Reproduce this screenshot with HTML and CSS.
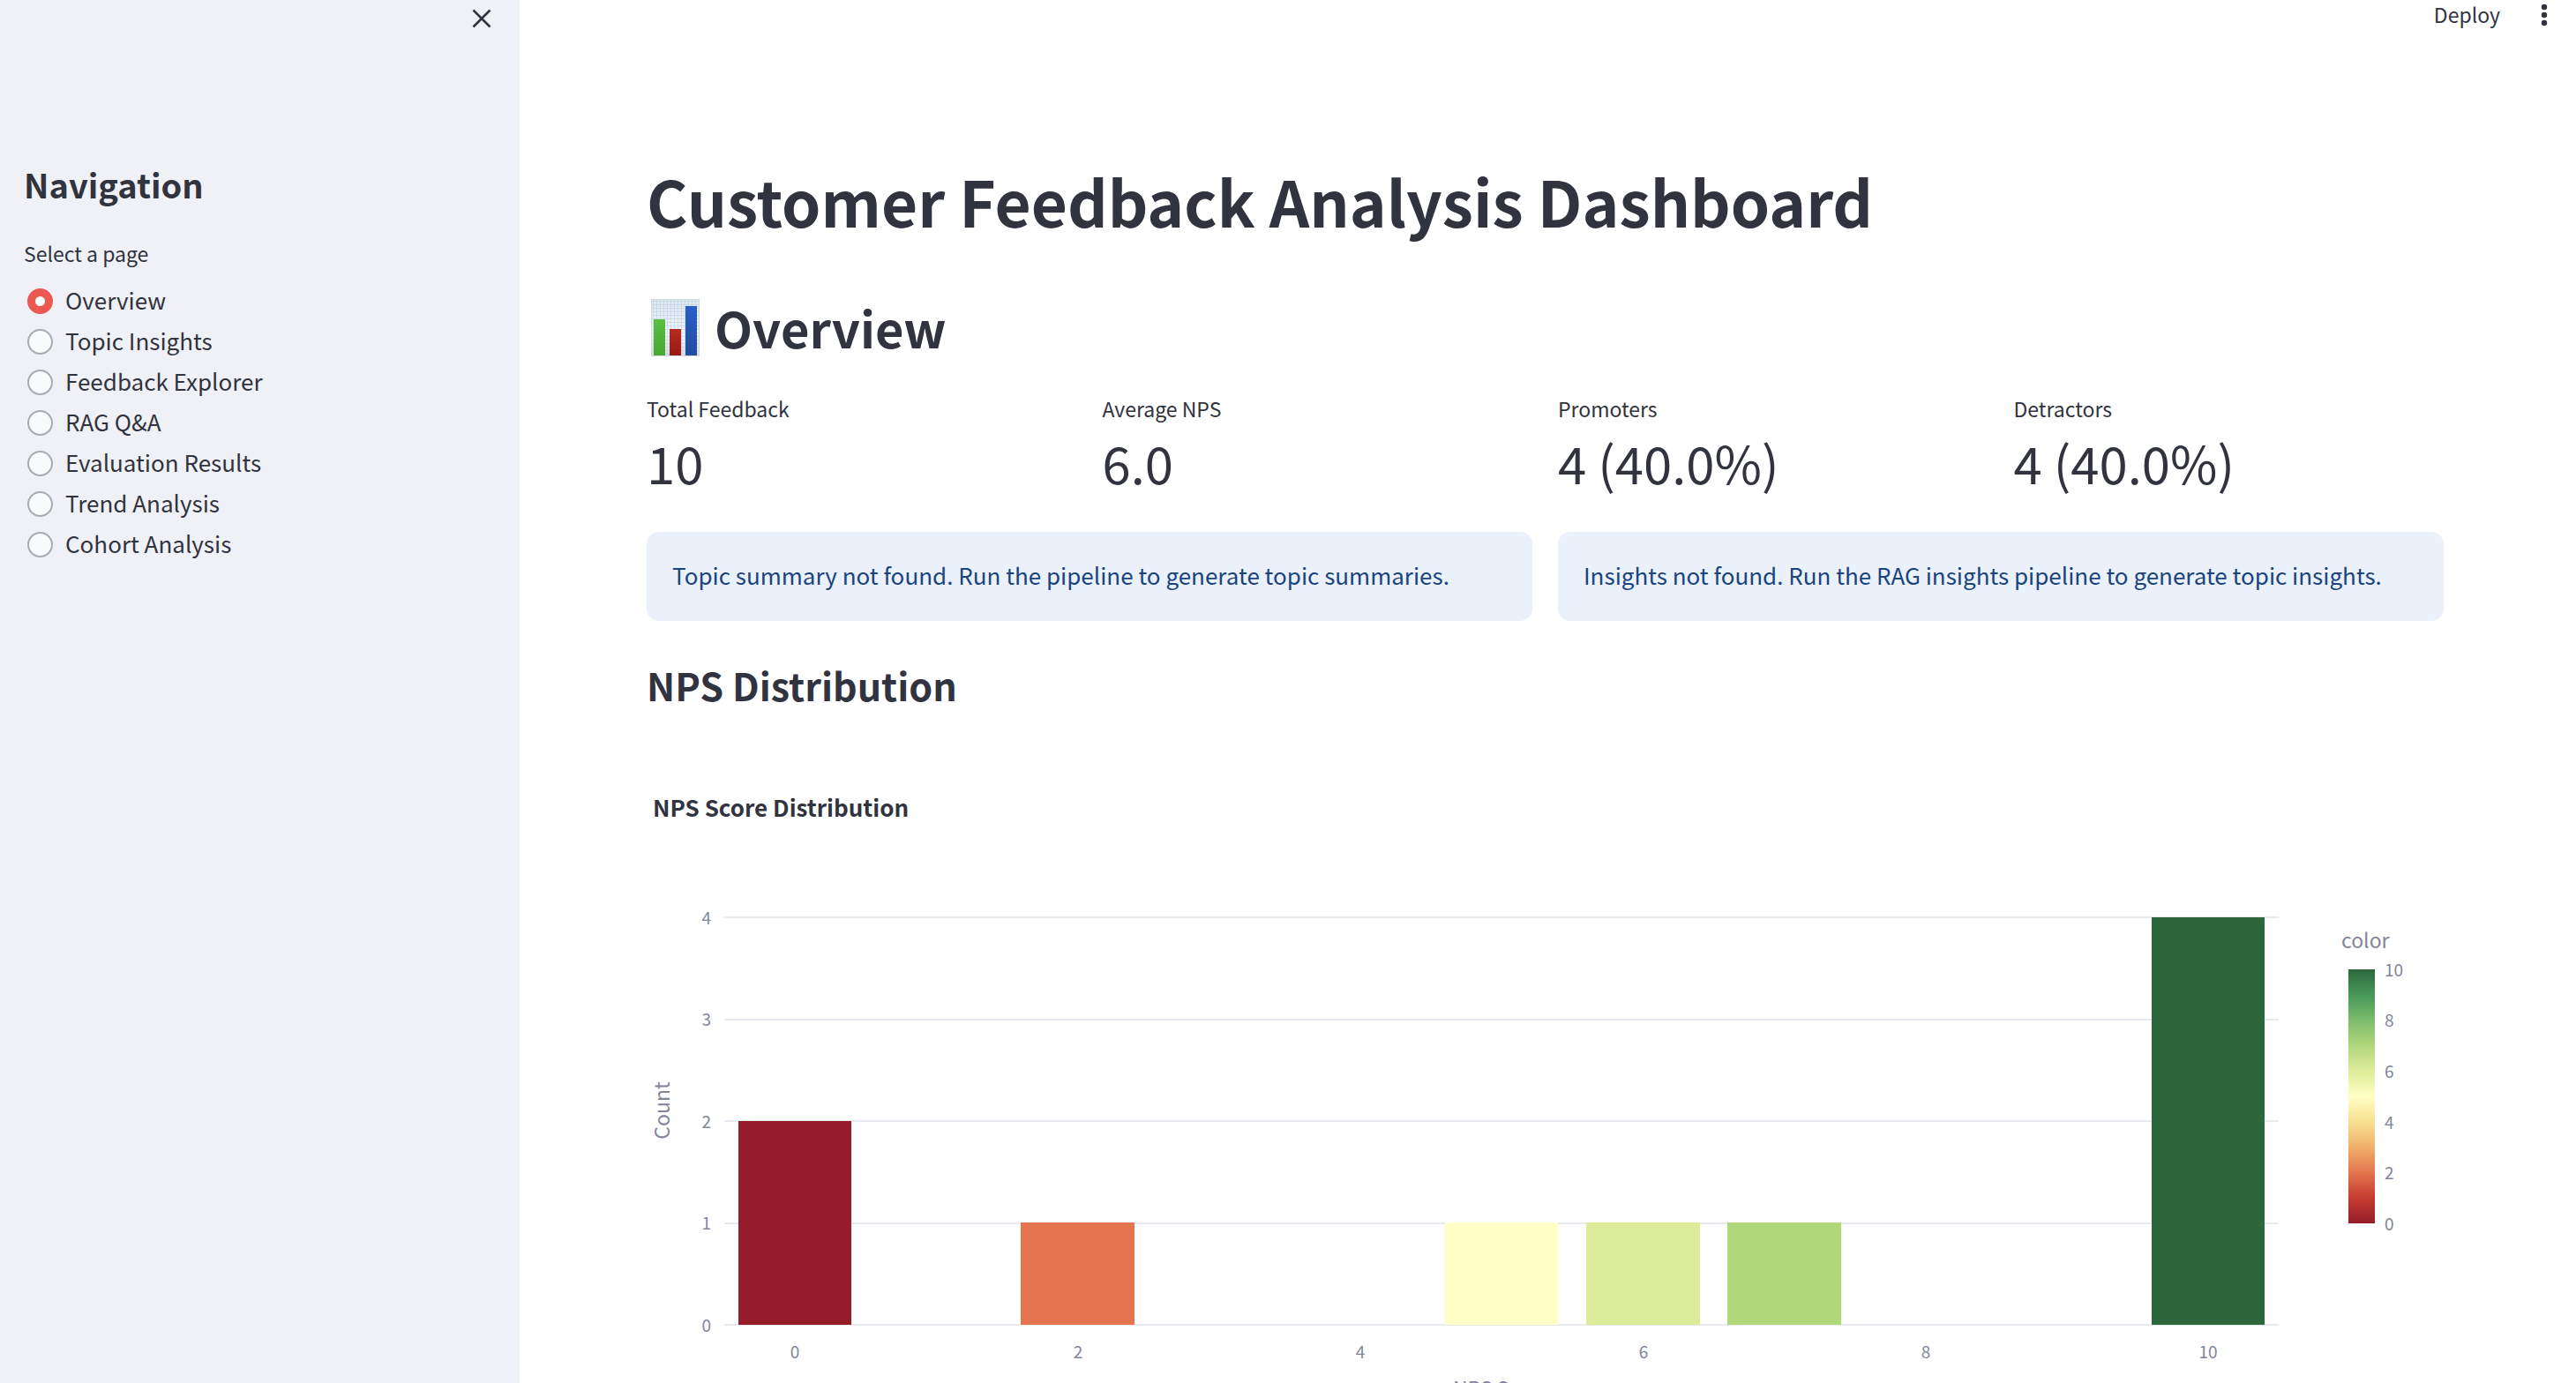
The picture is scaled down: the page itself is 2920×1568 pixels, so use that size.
FILE: index.html
```html
<!DOCTYPE html>
<html lang="en">
<head>
<meta charset="utf-8">
<title>Customer Feedback Analysis Dashboard</title>
<link rel="stylesheet" href="styles.css">
</head>
<body>
<div class="app">
  <aside class="sidebar">
    <div class="sidebar-top">
      <button class="icon-button" type="button" aria-label="Close sidebar">
        <svg width="22" height="22" viewBox="0 0 22 22"><path d="M1.5 1.5 20.500 20.500M20.500 1.500 1.500 20.500" fill="none" stroke="currentColor" stroke-width="2.600"/></svg>
      </button>
    </div>
    <h2 class="sidebar-title">Navigation</h2>
    <fieldset class="pages">
      <legend class="pages-label">Select a page</legend>
      <label class="page-option"><input class="radio" type="radio" name="page" checked><span>Overview</span></label>
      <label class="page-option"><input class="radio" type="radio" name="page"><span>Topic Insights</span></label>
      <label class="page-option"><input class="radio" type="radio" name="page"><span>Feedback Explorer</span></label>
      <label class="page-option"><input class="radio" type="radio" name="page"><span>RAG Q&amp;A</span></label>
      <label class="page-option"><input class="radio" type="radio" name="page"><span>Evaluation Results</span></label>
      <label class="page-option"><input class="radio" type="radio" name="page"><span>Trend Analysis</span></label>
      <label class="page-option"><input class="radio" type="radio" name="page"><span>Cohort Analysis</span></label>
    </fieldset>
  </aside>

  <div class="main">
    <header class="toolbar">
      <button class="deploy" type="button">Deploy</button>
      <button class="icon-button" type="button" aria-label="Menu">
        <svg width="8" height="26" viewBox="0 0 8 26" fill="currentColor"><circle cx="4" cy="4" r="3.200"/><circle cx="4" cy="13" r="3.200"/><circle cx="4" cy="22" r="3.200"/></svg>
      </button>
    </header>

    <main class="content">
      <h1 class="title">Customer Feedback Analysis Dashboard</h1>

      <h2 class="section-title">
        <svg class="emoji" width="55" height="65" viewBox="0 0 55 65" aria-hidden="true">
          <defs>
            <linearGradient id="paper" x1="0" y1="0" x2="0" y2="1"><stop offset="0" stop-color="#dfe6ec"/><stop offset="0.600" stop-color="#f1f5f9"/><stop offset="1" stop-color="#dcdfe2"/></linearGradient>
            <linearGradient id="green" x1="0" y1="0" x2="0" y2="1"><stop offset="0" stop-color="#58c040"/><stop offset="1" stop-color="#4aa634"/></linearGradient>
            <linearGradient id="red" x1="0" y1="0" x2="0" y2="1"><stop offset="0" stop-color="#b62a1e"/><stop offset="1" stop-color="#971a12"/></linearGradient>
            <linearGradient id="blue" x1="0" y1="0" x2="0" y2="1"><stop offset="0" stop-color="#2a60c8"/><stop offset="1" stop-color="#214b9e"/></linearGradient>
            <pattern id="grid" width="4" height="4" patternUnits="userSpaceOnUse"><path d="M0 2.500H4M2.500 0V4" stroke="#bcd6ea" stroke-width="1" opacity="0.700"/></pattern>
          </defs>
          <rect width="55" height="65" fill="url(#paper)"/>
          <rect width="55" height="65" fill="url(#grid)"/>
          <rect x="0.500" y="0.500" width="54" height="64" fill="none" stroke="#cfd5da" opacity="0.700"/>
          <rect x="3" y="23" width="13" height="41" fill="url(#green)"/>
          <rect x="21" y="34" width="13" height="30" fill="url(#red)"/>
          <rect x="39" y="8" width="13" height="56" fill="url(#blue)"/>
        </svg>
        <span>Overview</span>
      </h2>

      <dl class="metrics">
        <div class="metric"><dt>Total Feedback</dt><dd>10</dd></div>
        <div class="metric"><dt>Average NPS</dt><dd>6.0</dd></div>
        <div class="metric"><dt>Promoters</dt><dd>4 (40.0%)</dd></div>
        <div class="metric"><dt>Detractors</dt><dd>4 (40.0%)</dd></div>
      </dl>

      <div class="alerts">
        <p class="alert">Topic summary not found. Run the pipeline to generate topic summaries.</p>
        <p class="alert">Insights not found. Run the RAG insights pipeline to generate topic insights.</p>
      </div>

      <h3 class="chart-heading">NPS Distribution</h3>

      <svg class="chart" viewBox="0 0 2037 810" role="img" aria-label="NPS Score Distribution">
        <defs>
          <linearGradient id="scale" x1="0" y1="1" x2="0" y2="0">
            <stop offset="0" stop-color="#951d2a"/><stop offset="0.100" stop-color="#c53c31"/><stop offset="0.200" stop-color="#e4754e"/><stop offset="0.300" stop-color="#f0b06a"/><stop offset="0.400" stop-color="#f9e092"/><stop offset="0.500" stop-color="#ffffc6"/><stop offset="0.600" stop-color="#ddec98"/><stop offset="0.700" stop-color="#b1d77b"/><stop offset="0.800" stop-color="#7cbb6c"/><stop offset="0.900" stop-color="#479858"/><stop offset="1" stop-color="#2c673c"/>
          </linearGradient>
        </defs>
        <text class="chart-title" x="7" y="76">NPS Score Distribution</text>
        <path class="gridlines" d="M88 190H1850M88 306H1850M88 421H1850M88 537H1850M88 652H1850"/>
        <g>
          <rect x="104" y="421" width="128" height="231" fill="#951d2a"/>
          <rect x="424" y="536" width="129" height="116" fill="#e4754e"/>
          <rect x="905" y="536" width="128" height="116" fill="#ffffc6"/>
          <rect x="1065" y="536" width="129" height="116" fill="#ddec98"/>
          <rect x="1225" y="536" width="129" height="116" fill="#b1d77b"/>
          <rect x="1706" y="190" width="128" height="462" fill="#2c673c"/>
        </g>
        <g class="ticks" text-anchor="end">
          <text x="73" y="198">4</text><text x="73" y="313">3</text><text x="73" y="429">2</text><text x="73" y="544">1</text><text x="73" y="660">0</text>
        </g>
        <g class="ticks" text-anchor="middle">
          <text x="168" y="690">0</text><text x="489" y="690">2</text><text x="809" y="690">4</text><text x="1130" y="690">6</text><text x="1450" y="690">8</text><text x="1770" y="690">10</text>
        </g>
        <text class="axis-title" text-anchor="middle" x="969" y="733">NPS Score</text>
        <text class="axis-title" text-anchor="middle" transform="translate(26 409) rotate(-90)">Count</text>
        <text class="axis-title" x="1921" y="225">color</text>
        <rect x="1929" y="249" width="30" height="288" fill="url(#scale)"/>
        <g class="ticks">
          <text x="1970" y="257">10</text><text x="1970" y="314">8</text><text x="1970" y="372">6</text><text x="1970" y="430">4</text><text x="1970" y="487">2</text><text x="1970" y="545">0</text>
        </g>
      </svg>
    </main>
  </div>
</div>
</body>
</html>
```
FILE: styles.css
```css
* {
  box-sizing: border-box;
}

body {
  margin: 0;
  background: #fff;
  color: #31333f;
  font-family: "Noto Sans CJK SC", "Noto Sans", sans-serif;
  font-size: 26px;
  line-height: 42px;
}

h1, h2, h3, p, dl, dd {
  margin: 0;
}

button {
  padding: 0;
  border: 0;
  background: none;
  color: inherit;
  font: inherit;
}

.app {
  display: flex;
  height: 100vh;
  overflow: hidden;
}

.sidebar {
  flex: 0 0 589px;
  padding: 0 27px;
  background: #f0f1f6;
}

.sidebar-top {
  display: flex;
  justify-content: flex-end;
  height: 185px;
  padding: 10px 5px;
}

.icon-button {
  display: flex;
  align-self: flex-start;
}

.sidebar-title {
  font-size: 38px;
  line-height: 48px;
}

.pages {
  margin: 36px 0 0;
  padding: 0;
  border: 0;
}

.pages-label {
  margin-bottom: 13px;
  padding: 0;
  font-size: 23px;
  line-height: 36px;
}

.page-option {
  display: flex;
  align-items: center;
  gap: 14px;
  height: 46px;
  padding-left: 4px;
}

.page-option span {
  padding-bottom: 2px;
}

.radio {
  appearance: none;
  width: 29px;
  height: 29px;
  margin: 0;
  border: 2px solid #a9abb2;
  border-radius: 50%;
  background: #f9fafc;
}

.radio:checked {
  border: 9px solid #ec5953;
  background: #fff;
}

.main {
  flex: 1;
  min-width: 0;
  overflow-y: auto;
  scrollbar-width: none;
}

.toolbar {
  display: flex;
  justify-content: flex-end;
  gap: 46px;
  height: 40px;
  padding: 0 32px;
}

.toolbar .icon-button {
  padding-top: 4px;
}

.deploy {
  align-self: flex-start;
  font-size: 23px;
  line-height: 32px;
}

.content {
  padding: 144px 150px 60px 144px;
}

.title {
  font-size: 71px;
  line-height: 86px;
}

.section-title {
  display: flex;
  align-items: center;
  gap: 17px;
  margin-top: 66px;
  padding-left: 5px;
  font-size: 56px;
  line-height: 70px;
}

.metrics {
  display: grid;
  grid-template-columns: repeat(4, 1fr);
  gap: 29px;
  margin-top: 39px;
}

.metric dt {
  font-size: 23px;
  line-height: 36px;
}

.metric dd {
  margin-top: 8px;
  font-size: 58px;
  line-height: 70px;
}

.alerts {
  display: grid;
  grid-template-columns: repeat(2, 1fr);
  gap: 29px;
  margin-top: 44px;
}

.alert {
  padding: 28px 29px 31px;
  border-radius: 14px;
  background: #eaf1fb;
  color: #1b437e;
}

.chart-heading {
  margin-top: 45px;
  font-size: 43px;
  line-height: 54px;
}

.chart {
  display: block;
  width: 100%;
  margin-top: 47px;
}

.chart-title {
  fill: #31333f;
  font-size: 26px;
  font-weight: 700;
}

.gridlines {
  fill: none;
  stroke: #e7eaf1;
  stroke-width: 2px;
}

.ticks {
  fill: #828699;
  font-size: 19px;
}

.axis-title {
  fill: #828699;
  font-size: 23px;
}
```
